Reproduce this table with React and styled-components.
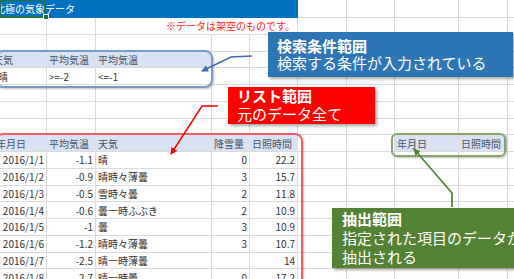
import React from "react";
import styled, { createGlobalStyle } from "styled-components";

// ------------------ Global ------------------
const GlobalStyle = createGlobalStyle`
  html, body {
    margin: 0;
    padding: 0;
    background: #fff;
    overflow: hidden;
  }
  body {
    font-family: "Noto Sans CJK JP", "Noto Sans", sans-serif;
  }
`;

// ------------------ Sheet grid ------------------
const Page = styled.div`
  position: relative;
  width: 514px;
  height: 279px;
  overflow: hidden;
`;

const Sheet = styled.div`
  display: grid;
  grid-template-columns: 47px 49px 116px 38px 48px 49px 48px 64px 49px 60px;
  grid-template-rows: 18px repeat(16, 16.75px);
  font-size: 10px;
  color: #333;
`;

const fills = {
  title: "#0070c0",
  head: "#d9e1f2",
};

const Cell = styled.div`
  position: relative;
  box-sizing: border-box;
  grid-column: span ${(p) => p.$span || 1};
  display: flex;
  align-items: center;
  justify-content: ${(p) => (p.$align === "right" ? "flex-end" : "flex-start")};
  padding: ${(p) => (p.$align === "right" ? "0 2px 0 0" : "0 0 0 2px")};
  white-space: nowrap;
  background: ${(p) => fills[p.$kind] || "transparent"};
  border-right: 1px solid ${(p) => fills[p.$kind] || "#dadada"};
  border-bottom: 1px solid ${(p) => (p.$kind === "title" ? fills.title : "#dadada")};
  color: ${(p) =>
    p.$kind === "title" ? "#fff" : p.$kind === "note" ? "#ff1a1a" : p.$kind === "head" ? "#44546a" : "#333"};
  z-index: ${(p) => (p.$over ? 2 : "auto")};

  ${(p) =>
    p.$selected &&
    `
    &::before {
      content: "";
      position: absolute;
      inset: -1px 0 -1px -1px;
      border: 2px solid #217346;
    }
    &::after {
      content: "";
      position: absolute;
      right: -3px;
      bottom: -3px;
      width: 4px;
      height: 4px;
      background: #217346;
      border: 1px solid #fff;
    }
  `}
`;

const CellText = styled.span`
  margin-left: ${(p) => p.$shift || 0}px;
`;

// ------------------ Overlays ------------------
const Frame = styled.div`
  position: absolute;
  left: ${(p) => p.$x}px;
  top: ${(p) => p.$y}px;
  width: ${(p) => p.$w}px;
  height: ${(p) => p.$h}px;
  box-sizing: border-box;
  border: 2.5px solid ${(p) => p.$color};
  border-radius: ${(p) => p.$r || 8}px;
  box-shadow: 1px 1px 2px rgba(0, 0, 0, 0.25);
`;

const Arrows = styled.svg`
  position: absolute;
  left: 0;
  top: 0;
  pointer-events: none;
`;

const Callout = styled.div`
  position: absolute;
  left: ${(p) => p.$x}px;
  top: ${(p) => p.$y}px;
  width: ${(p) => p.$w}px;
  height: ${(p) => p.$h}px;
  box-sizing: border-box;
  padding: ${(p) => p.$pt || 0}px 0 0 ${(p) => p.$pl || 9}px;
  background: ${(p) => p.$bg};
  color: #fff;
  font-size: 15px;
  line-height: ${(p) => p.$lh}px;
  white-space: nowrap;
  box-shadow: 2px 2px 3px rgba(0, 0, 0, 0.35);
`;

const CalloutTitle = styled.div`
  font-weight: bold;
`;

// ------------------ Data ------------------
const weather = [
  ["2016/1/1", "-1.1", "晴", "0", "22.2"],
  ["2016/1/2", "-0.9", "晴時々薄曇", "3", "15.7"],
  ["2016/1/3", "-0.5", "雪時々曇", "2", "11.8"],
  ["2016/1/4", "-0.6", "曇一時ふぶき", "2", "10.9"],
  ["2016/1/5", "-1", "曇", "3", "10.9"],
  ["2016/1/6", "-1.2", "晴時々薄曇", "3", "10.7"],
  ["2016/1/7", "-2.5", "晴一時薄曇", "", "14"],
  ["2016/1/8", "-2.7", "晴一時曇", "0", "17.2"],
];

const empty = (n) => Array.from({ length: n }, () => ({}));

const rows = [
  [
    { text: "北極の気象データ", kind: "title", shift: -7, selected: true, over: true },
    { kind: "title" },
    { kind: "title" },
    { kind: "title" },
    { kind: "title" },
    ...empty(5),
  ],
  [{}, {}, { text: "※データは架空のものです。", kind: "note", align: "right", span: 3 }, ...empty(5)],
  empty(10),
  [
    { text: "天気", kind: "head", shift: -9 },
    { text: "平均気温", kind: "head" },
    { text: "平均気温", kind: "head" },
    ...empty(7),
  ],
  [{ text: "晴", shift: -4 }, { text: ">=-2" }, { text: "<=-1" }, ...empty(7)],
  empty(10),
  empty(10),
  empty(10),
  [
    { text: "年月日", kind: "head", shift: -6 },
    { text: "平均気温", kind: "head" },
    { text: "天気", kind: "head" },
    { text: "降雪量", kind: "head" },
    { text: "日照時間", kind: "head" },
    {},
    {},
    { text: "年月日", kind: "head" },
    { text: "日照時間", kind: "head" },
    {},
  ],
  ...weather.map(([d, t, w, s, h]) => [
    { text: d, align: "right" },
    { text: t, align: "right" },
    { text: w },
    { text: s, align: "right" },
    { text: h, align: "right" },
    ...empty(5),
  ]),
];

// ------------------ Component ------------------
const App = () => {
  return (
    <Page>
      <GlobalStyle />
      <Sheet>
        {rows.map((row, r) =>
          row.map((c, i) => (
            <Cell
              key={`${r}-${i}`}
              $kind={c.kind}
              $align={c.align}
              $span={c.span}
              $selected={c.selected}
              $over={c.over}
            >
              {c.text && <CellText $shift={c.shift}>{c.text}</CellText>}
            </Cell>
          ))
        )}
      </Sheet>

      {/* range frames */}
      <Frame $x={-5} $y={50} $w={218} $h={38} $color="#7b98c6" />
      <Frame $x={-5} $y={133} $w={308} $h={160} $color="#ee5f63" />
      <Frame $x={391} $y={133} $w={115} $h={24} $color="#86a56a" $r={6} />

      {/* connectors */}
      <Arrows width="514" height="279" viewBox="0 0 514 279">
        <defs>
          {[
            ["blue", "#3f6db3"],
            ["red", "#ff0000"],
            ["green", "#548235"],
          ].map(([id, col]) => (
            <marker
              key={id}
              id={`head-${id}`}
              viewBox="0 0 8 8"
              refX="7"
              refY="4"
              markerWidth="7"
              markerHeight="7"
              markerUnits="userSpaceOnUse"
              orient="auto"
            >
              <path d="M0,0 L8,4 L0,8 z" fill={col} />
            </marker>
          ))}
        </defs>
        <polyline
          points="252,56 231,57 202,71"
          fill="none"
          stroke="#3f6db3"
          strokeWidth="1.75"
          markerEnd="url(#head-blue)"
        />
        <polyline
          points="218,106 202,106 171,154"
          fill="none"
          stroke="#ff0000"
          strokeWidth="1.5"
          markerEnd="url(#head-red)"
        />
        <polyline
          points="452,207 452,193 414,149"
          fill="none"
          stroke="#548235"
          strokeWidth="1.75"
          markerEnd="url(#head-green)"
        />
      </Arrows>

      {/* callouts */}
      <Callout $x={268} $y={32} $w={245} $h={45} $bg="#2e75b6" $lh={17} $pt={5}>
        <CalloutTitle>検索条件範囲</CalloutTitle>
        <div>検索する条件が入力されている</div>
      </Callout>
      <Callout $x={228} $y={87} $w={147} $h={37} $bg="#ff0000" $lh={18}>
        <CalloutTitle>リスト範囲</CalloutTitle>
        <div>元のデータ全て</div>
      </Callout>
      <Callout $x={332} $y={208} $w={200} $h={60} $bg="#548235" $lh={19} $pt={1} $pl={10}>
        <CalloutTitle>抽出範囲</CalloutTitle>
        <div>指定された項目のデータが</div>
        <div>抽出される</div>
      </Callout>
    </Page>
  );
};

export default App;
